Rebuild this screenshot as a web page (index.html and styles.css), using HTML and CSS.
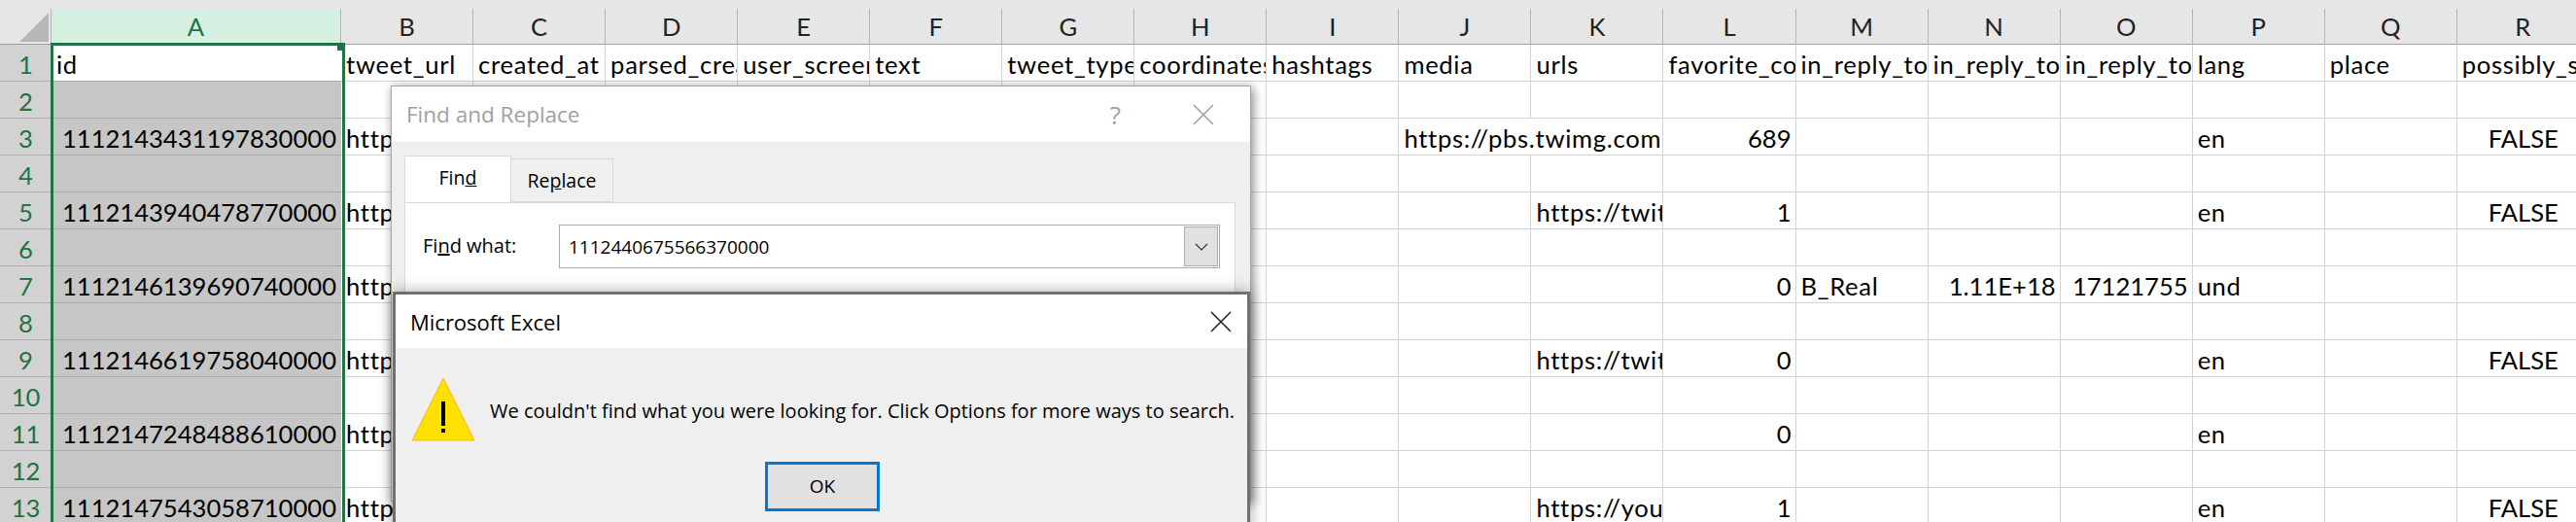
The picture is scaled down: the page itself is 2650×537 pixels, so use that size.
FILE: index.html
```html
<!DOCTYPE html><html><head><meta charset="utf-8"/>
<title>Excel - Find and Replace</title>
<link rel="stylesheet" href="styles.css">
</head>
<body>

<div class="sheet">
<!-- column letters -->
<div class="corner"><svg width="53" height="37" viewBox="0 0 53 37"><polygon points="20,34 50,4 50,34" fill="#b7b7b7"/></svg></div>
<span class="col sel">A</span><span class="col">B</span><span class="col">C</span><span class="col">D</span><span class="col">E</span><span class="col">F</span><span class="col">G</span><span class="col">H</span><span class="col">I</span><span class="col">J</span><span class="col">K</span><span class="col">L</span><span class="col">M</span><span class="col">N</span><span class="col">O</span><span class="col">P</span><span class="col">Q</span><span class="col">R</span>
<!-- 1 -->
<span class="rh">1</span><span class="c active">id</span><span class="c">tweet_url</span><span class="c">created_at</span><span class="c">parsed_created_at</span><span class="c">user_screen_name</span><span class="c">text</span><span class="c">tweet_type</span><span class="c">coordinates</span><span class="c">hashtags</span><span class="c">media</span><span class="c">urls</span><span class="c">favorite_count</span><span class="c">in_reply_to_screen_name</span><span class="c">in_reply_to_status_id</span><span class="c">in_reply_to_user_id</span><span class="c">lang</span><span class="c">place</span><span class="c">possibly_sensitive</span>
<!-- 2 -->
<span class="rh">2</span><span class="c a"></span><span class="c"></span><span class="c"></span><span class="c"></span><span class="c"></span><span class="c"></span><span class="c"></span><span class="c"></span><span class="c"></span><span class="c"></span><span class="c"></span><span class="c"></span><span class="c"></span><span class="c"></span><span class="c"></span><span class="c"></span><span class="c"></span><span class="c"></span>
<!-- 3 -->
<span class="rh">3</span><span class="c a num">1112143431197830000</span><span class="c">https://twitter.com/</span><span class="c"></span><span class="c"></span><span class="c"></span><span class="c"></span><span class="c"></span><span class="c"></span><span class="c"></span><span class="c two">https://pbs.twimg.com/media/D2</span><span class="c num">689</span><span class="c"></span><span class="c"></span><span class="c"></span><span class="c">en</span><span class="c"></span><span class="c mid">FALSE</span>
<!-- 4 -->
<span class="rh">4</span><span class="c a"></span><span class="c"></span><span class="c"></span><span class="c"></span><span class="c"></span><span class="c"></span><span class="c"></span><span class="c"></span><span class="c"></span><span class="c"></span><span class="c"></span><span class="c"></span><span class="c"></span><span class="c"></span><span class="c"></span><span class="c"></span><span class="c"></span><span class="c"></span>
<!-- 5 -->
<span class="rh">5</span><span class="c a num">1112143940478770000</span><span class="c">https://twitter.com/</span><span class="c"></span><span class="c"></span><span class="c"></span><span class="c"></span><span class="c"></span><span class="c"></span><span class="c"></span><span class="c"></span><span class="c">https://twitter.com/</span><span class="c num">1</span><span class="c"></span><span class="c"></span><span class="c"></span><span class="c">en</span><span class="c"></span><span class="c mid">FALSE</span>
<!-- 6 -->
<span class="rh">6</span><span class="c a"></span><span class="c"></span><span class="c"></span><span class="c"></span><span class="c"></span><span class="c"></span><span class="c"></span><span class="c"></span><span class="c"></span><span class="c"></span><span class="c"></span><span class="c"></span><span class="c"></span><span class="c"></span><span class="c"></span><span class="c"></span><span class="c"></span><span class="c"></span>
<!-- 7 -->
<span class="rh">7</span><span class="c a num">1112146139690740000</span><span class="c">https://twitter.com/</span><span class="c"></span><span class="c"></span><span class="c"></span><span class="c"></span><span class="c"></span><span class="c"></span><span class="c"></span><span class="c"></span><span class="c"></span><span class="c num">0</span><span class="c">B_Real</span><span class="c num">1.11E+18</span><span class="c num">17121755</span><span class="c">und</span><span class="c"></span><span class="c"></span>
<!-- 8 -->
<span class="rh">8</span><span class="c a"></span><span class="c"></span><span class="c"></span><span class="c"></span><span class="c"></span><span class="c"></span><span class="c"></span><span class="c"></span><span class="c"></span><span class="c"></span><span class="c"></span><span class="c"></span><span class="c"></span><span class="c"></span><span class="c"></span><span class="c"></span><span class="c"></span><span class="c"></span>
<!-- 9 -->
<span class="rh">9</span><span class="c a num">1112146619758040000</span><span class="c">https://twitter.com/</span><span class="c"></span><span class="c"></span><span class="c"></span><span class="c"></span><span class="c"></span><span class="c"></span><span class="c"></span><span class="c"></span><span class="c">https://twitter.com/</span><span class="c num">0</span><span class="c"></span><span class="c"></span><span class="c"></span><span class="c">en</span><span class="c"></span><span class="c mid">FALSE</span>
<!-- 10 -->
<span class="rh">10</span><span class="c a"></span><span class="c"></span><span class="c"></span><span class="c"></span><span class="c"></span><span class="c"></span><span class="c"></span><span class="c"></span><span class="c"></span><span class="c"></span><span class="c"></span><span class="c"></span><span class="c"></span><span class="c"></span><span class="c"></span><span class="c"></span><span class="c"></span><span class="c"></span>
<!-- 11 -->
<span class="rh">11</span><span class="c a num">1112147248488610000</span><span class="c">https://twitter.com/</span><span class="c"></span><span class="c"></span><span class="c"></span><span class="c"></span><span class="c"></span><span class="c"></span><span class="c"></span><span class="c"></span><span class="c"></span><span class="c num">0</span><span class="c"></span><span class="c"></span><span class="c"></span><span class="c">en</span><span class="c"></span><span class="c"></span>
<!-- 12 -->
<span class="rh">12</span><span class="c a"></span><span class="c"></span><span class="c"></span><span class="c"></span><span class="c"></span><span class="c"></span><span class="c"></span><span class="c"></span><span class="c"></span><span class="c"></span><span class="c"></span><span class="c"></span><span class="c"></span><span class="c"></span><span class="c"></span><span class="c"></span><span class="c"></span><span class="c"></span>
<!-- 13 -->
<span class="rh">13</span><span class="c a num">1112147543058710000</span><span class="c">https://twitter.com/</span><span class="c"></span><span class="c"></span><span class="c"></span><span class="c"></span><span class="c"></span><span class="c"></span><span class="c"></span><span class="c"></span><span class="c">https://youtu.be/</span><span class="c num">1</span><span class="c"></span><span class="c"></span><span class="c"></span><span class="c">en</span><span class="c"></span><span class="c mid">FALSE</span>
<!-- selection box round column A -->
<div class="selbox"><div class="handle"></div></div>
</div>

<!-- Find and Replace -->
<div class="dlg find">
	<div class="dlg-title">
		<span class="title-text">Find and Replace</span>
		<span class="help">?</span>
		<svg class="close" width="22" height="22" viewBox="0 0 22 22"><path d="M1 1 21 21M21 1 1 21" stroke="#a0a0a0" stroke-width="1.6" fill="none"/></svg>
	</div>
	<div class="dlg-body">
		<div class="tabs">
			<div class="tab on">Fin<u>d</u></div>
			<div class="tab">Re<u>p</u>lace</div>
		</div>
		<div class="panel">
			<label class="what">Fi<u>n</u>d what:</label>
			<div class="input">
				<span class="val">1112440675566370000</span>
				<div class="drop"><svg width="14" height="8" viewBox="0 0 14 8"><path d="M1 1 7 7 13 1" stroke="#333" stroke-width="1.2" fill="none"/></svg></div>
			</div>
		</div>
	</div>
</div>

<!-- message box -->
<div class="dlg msg">
	<div class="msg-title">
		<span>Microsoft Excel</span>
		<svg width="22" height="22" viewBox="0 0 22 22"><path d="M1 1 21 21M21 1 1 21" stroke="#222" stroke-width="1.6" fill="none"/></svg>
	</div>
	<div class="msg-body">
		<div class="msg-row">
			<svg class="warn" width="66" height="66" viewBox="0 0 66 66"><polygon points="33,1 65,65 1,65" fill="#ffe000" stroke="#f7b918" stroke-width="1"/><rect x="31" y="25" width="4" height="25" fill="#000"/><rect x="31" y="53" width="4" height="4" fill="#000"/></svg>
			<span class="msg-text">We couldn't find what you were looking for. Click Options for more ways to search.</span>
		</div>
		<div class="ok">OK</div>
	</div>
</div>

</body>
</html>
```

FILE: styles.css
```css
html, body {
	margin: 0;
	height: 537px;
	overflow: hidden;
	background: white;
}
/* sheet */
.sheet {
	position: relative;
	display: grid;
	grid-template-columns: 53px 298px repeat(17, 136.05px);
	grid-auto-rows: 38px;
	grid-template-rows: 37px;
	padding-top: 9px;
	background: linear-gradient(#e6e6e6 9px, transparent 9px);
	font-family: "Lato", sans-serif;
	font-size: 25.6px;
	color: #000;
}
.corner {
	background: #e6e6e6;
	border-right: 1px solid #b4b4b4;
	border-bottom: 1px solid #9f9f9f;
	box-sizing: border-box;
}
.corner svg {
	display: block;
}
.col {
	box-sizing: border-box;
	background: #e6e6e6;
	border-right: 1px solid #b4b4b4;
	border-bottom: 1px solid #9f9f9f;
	text-align: center;
	line-height: 37px;
	color: #222;
}
.col.sel {
	background: #d3f0e0;
	color: #217346;
}
.rh {
	box-sizing: border-box;
	background: #d2d2d2;
	border-bottom: 1px solid #b0b0b0;
	text-align: center;
	line-height: 40px;
	color: #217346;
}
.c {
	box-sizing: border-box;
	border-right: 1px solid #d4d4d4;
	border-bottom: 1px solid #d4d4d4;
	padding: 0 4px 0 5px;
	line-height: 40px;
	letter-spacing: .7px;
	white-space: nowrap;
	overflow: hidden;
}
.c.a {
	background: #c6c6c6;
	border-bottom-color: #a9a9a9;
	border-right: 0;
	padding-right: 5px;
}
.c.active {
	border-bottom-color: #a9a9a9;
	border-right: 0;
}
.num, .mid {
	letter-spacing: 0;
}
.num {
	text-align: right;
}
.mid {
	text-align: center;
}
.two {
	grid-column: span 2;
}
.selbox {
	position: absolute;
	left: 52px;
	top: 44px;
	width: 303px;
	height: 500px;
	box-sizing: border-box;
	border: 3px solid #217346;
}
.handle {
	position: absolute;
	right: -3px;
	top: -3px;
	width: 8px;
	height: 8px;
	background: #217346;
}
/* dialogs */
.dlg {
	position: absolute;
	font-family: "Open Sans", sans-serif;
	box-sizing: border-box;
}
.find {
	left: 402px;
	top: 88px;
	width: 885px;
	height: 428px;
	border: 1px solid #a6a6a6;
	background: #efefef;
	box-shadow: 3px 3px 10px rgba(0, 0, 0, .35), 0 0 10px rgba(0, 0, 0, .15);
	display: flex;
	flex-direction: column;
}
.dlg-title {
	height: 57px;
	flex: none;
	background: white;
	display: flex;
	align-items: center;
	padding: 0 37px 0 15px;
	color: #a0a0a0;
}
.title-text {
	font-size: 22.5px;
	flex: 1;
}
.help {
	font-size: 26px;
	margin-right: 74px;
}
.dlg-body {
	padding: 15px 15px 0 13px;
	flex: 1;
	display: flex;
	flex-direction: column;
}
.tabs {
	display: flex;
	align-items: flex-end;
	height: 47px;
	flex: none;
	font-size: 19.5px;
	color: #000;
	position: relative;
	z-index: 1;
}
.tab {
	box-sizing: border-box;
	width: 105px;
	height: 45px;
	line-height: 44px;
	text-align: center;
	border: 1px solid #d9d9d9;
	border-left: 0;
}
.tab.on {
	width: 110px;
	height: 48px;
	line-height: 44px;
	background: white;
	border-left: 1px solid #d9d9d9;
	border-bottom: 0;
}
.panel {
	flex: 1;
	background: white;
	border: 1px solid #d9d9d9;
	display: flex;
	align-items: flex-start;
	padding: 22px 15px 0 18px;
	font-size: 19px;
}
.what {
	width: 140px;
	line-height: 44px;
	flex: none;
	font-size: 20px;
}
.input {
	flex: 1;
	box-sizing: border-box;
	height: 45px;
	border: 1px solid #a9a9b0;
	display: flex;
	align-items: center;
	padding: 1px;
}
.val {
	flex: 1;
	padding-left: 8px;
}
.drop {
	box-sizing: border-box;
	width: 35px;
	height: 41px;
	background: #e1e1e1;
	border: 1px solid #adadad;
	display: flex;
	align-items: center;
	justify-content: center;
}
.msg {
	left: 404px;
	top: 300px;
	width: 882px;
	height: 260px;
	border: 3px solid #707070;
	background: #efefef;
	box-shadow: 0 0 14px rgba(0, 0, 0, .35);
}
.msg-title {
	height: 55px;
	background: white;
	display: flex;
	align-items: center;
	justify-content: space-between;
	padding: 0 16px 0 15px;
	font-size: 22px;
	color: #000;
}
.msg-body {
	padding-top: 30px;
	display: flex;
	flex-direction: column;
}
.msg-row {
	display: flex;
	align-items: center;
	padding-left: 16px;
	gap: 15px;
	font-size: 20px;
}
.warn {
	flex: none;
}
.msg-text {
	white-space: nowrap;
	padding-top: 2px;
}
.ok {
	box-sizing: border-box;
	width: 118px;
	height: 51px;
	margin: 21px 0 0 380px;
	background: #e1e1e1;
	border: 3px solid #0078d7;
	font-size: 19px;
	line-height: 44px;
	text-align: center;
}
```
